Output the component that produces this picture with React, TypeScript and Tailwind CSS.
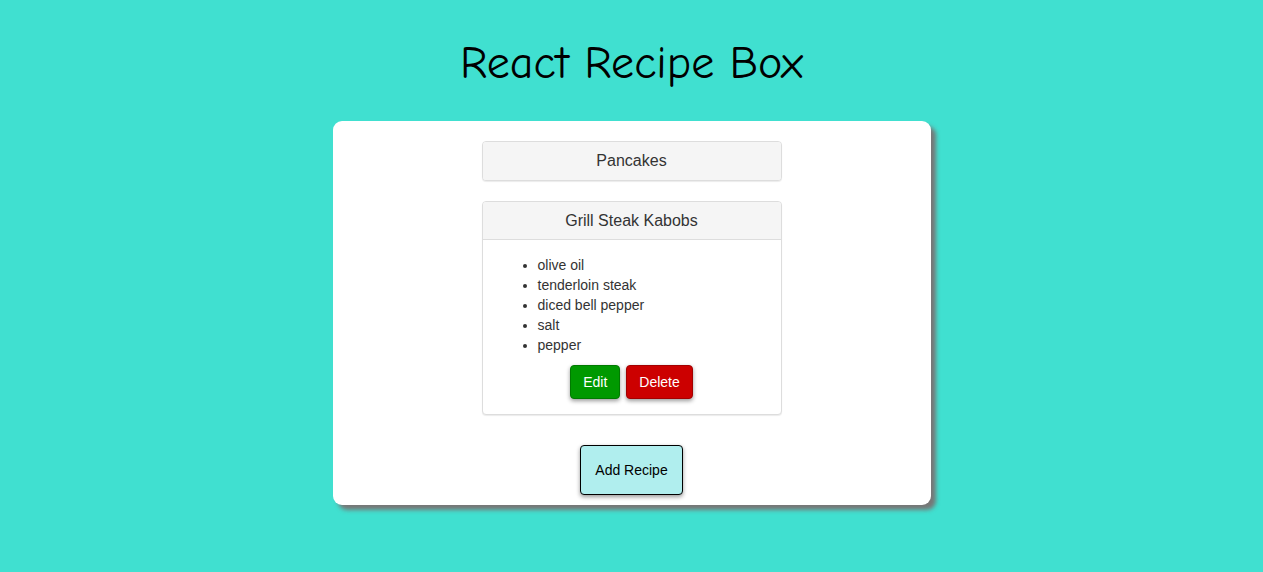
import React from 'react'

/* React Recipe Box — turquoise page, white card, bootstrap-ish panels */

interface Recipe {
  name: string
  ingredients: string[]
  open: boolean
}

const recipes: Recipe[] = [
  { name: 'Pancakes', ingredients: ['flour', 'eggs', 'milk'], open: false },
  {
    name: 'Grill Steak Kabobs',
    ingredients: ['olive oil', 'tenderloin steak', 'diced bell pepper', 'salt', 'pepper'],
    open: true,
  },
]

const RecipePanel = ({ recipe }: { recipe: Recipe }) => (
  <div className="mb-5 w-[300px] rounded-[4px] border border-[#dddddd] bg-white shadow-[0_1px_1px_rgba(0,0,0,0.08)]">
    <div
      className={`rounded-t-[3px] bg-[#f5f5f5] px-[15px] py-[10px] text-center text-[16px] leading-[1.1] text-[#333] ${
        recipe.open ? 'border-b border-[#dddddd]' : 'rounded-b-[3px]'
      }`}
    >
      {recipe.name}
    </div>
    {recipe.open && (
      <div className="p-[15px]">
        <ul className="mb-[10px] list-disc pl-10 text-[14px] leading-5 text-[#333]">
          {recipe.ingredients.map(i => (
            <li key={i}>{i}</li>
          ))}
        </ul>
        <div className="flex justify-center gap-[6px]">
          <button className="h-[34px] rounded-[4px] border border-[#007a00] bg-[#009900] px-3 text-[14px] text-white shadow-[0_2px_4px_rgba(0,0,0,0.4)]">
            Edit
          </button>
          <button className="h-[34px] rounded-[4px] border border-[#a30000] bg-[#cc0000] px-3 text-[14px] text-white shadow-[0_2px_4px_rgba(0,0,0,0.4)]">
            Delete
          </button>
        </div>
      </div>
    )}
  </div>
)

export default function App() {
  return (
    <main
      className="min-h-screen bg-[#40e0d0] pt-[30px]"
      style={{ fontFamily: '"Liberation Sans", Arial, sans-serif' }}
    >
      <h1
        className="h-[91px] pt-[2px] text-center text-[46px] leading-[64px] text-black"
        style={{ fontFamily: '"Comic Sans MS", "Comic Neue", cursive, sans-serif' }}
      >
        React Recipe Box
      </h1>

      <section className="mx-auto flex w-[598px] flex-col items-center rounded-[9px] bg-white pt-5 pb-[10px] shadow-[5px_5px_4px_#777777]">
        {recipes.map(r => (
          <RecipePanel key={r.name} recipe={r} />
        ))}
        <button className="mt-[10px] h-[50px] w-[103px] rounded-[4px] border border-black bg-[#b0eeee] text-[14px] text-black shadow-[0_2px_4px_rgba(0,0,0,0.4)]">
          Add Recipe
        </button>
      </section>
    </main>
  )
}
